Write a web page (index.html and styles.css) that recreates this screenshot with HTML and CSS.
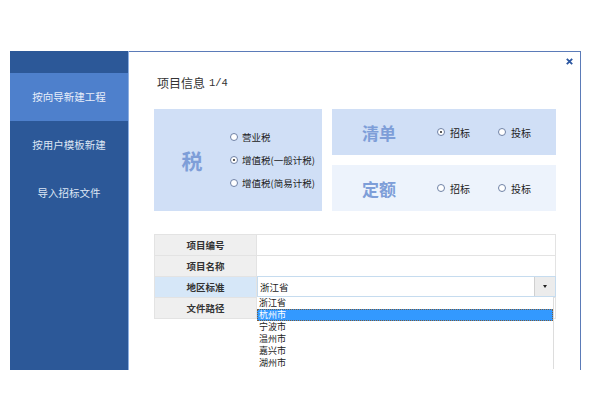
FILE: index.html
```html
<!DOCTYPE html>
<html lang="zh-CN">
<head>
<meta charset="utf-8">
<title>项目信息</title>
<link rel="stylesheet" href="styles.css">
</head>
<body>
<div class="window">
  <nav class="sidebar">
    <div class="nav-item active">按向导新建工程</div>
    <div class="nav-item">按用户模板新建</div>
    <div class="nav-item">导入招标文件</div>
  </nav>
  <main class="main">
    <span class="close" aria-label="关闭">
      <svg width="7" height="7" viewBox="0 0 7 7"><path d="M0.8 0.8 L6.2 6.2 M6.2 0.8 L0.8 6.2" stroke="#2b56a0" stroke-width="1.8" fill="none"/></svg>
    </span>
    <h1 class="title">项目信息 <span class="page">1/4</span></h1>
    <section class="options">
      <div class="box tax">
        <div class="tax-label">税</div>
        <div class="tax-opts">
          <label class="radio"><span class="circle"></span>营业税</label>
          <label class="radio"><span class="circle checked"></span>增值税(一般计税)</label>
          <label class="radio"><span class="circle"></span>增值税(简易计税)</label>
        </div>
      </div>
      <div class="right-col">
        <div class="box row-box dark">
          <div class="box-label">清单</div>
          <label class="radio opt1"><span class="circle checked"></span>招标</label>
          <label class="radio"><span class="circle"></span>投标</label>
        </div>
        <div class="box row-box light">
          <div class="box-label">定额</div>
          <label class="radio opt1"><span class="circle"></span>招标</label>
          <label class="radio"><span class="circle"></span>投标</label>
        </div>
      </div>
    </section>
    <div class="form">
      <div class="form-row">
        <div class="cell-label">项目编号</div>
        <div class="cell-value"></div>
      </div>
      <div class="form-row">
        <div class="cell-label">项目名称</div>
        <div class="cell-value"></div>
      </div>
      <div class="form-row">
        <div class="cell-label focus">地区标准</div>
        <div class="cell-value select-cell">
          <div class="select">
            <span class="select-text">浙江省</span>
            <span class="select-btn"><span class="arrow"></span></span>
          </div>
          <ul class="dropdown">
            <li>浙江省</li>
            <li class="selected">杭州市</li>
            <li>宁波市</li>
            <li>温州市</li>
            <li>嘉兴市</li>
            <li>湖州市</li>
          </ul>
        </div>
      </div>
      <div class="form-row">
        <div class="cell-label">文件路径</div>
        <div class="cell-value"></div>
      </div>
    </div>
  </main>
</div>
</body>
</html>
```

FILE: styles.css
```css
html, body {
  margin: 0;
  padding: 0;
  background: #ffffff;
  font-family: "Noto Sans CJK SC", "Noto Sans", sans-serif;
}

.window {
  display: flex;
  margin: 51px 0 0 10px;
  width: 571px;
  height: 319px;
  border-right: 1px solid #5b7bb8;
  box-sizing: border-box;
}

.sidebar {
  width: 119px;
  flex: none;
  background: #2c5898;
  border-right: 1px solid #8eb0e2;
  padding-top: 22px;
  box-sizing: border-box;
}

.nav-item {
  height: 48px;
  display: flex;
  align-items: center;
  justify-content: center;
  color: #dde6f4;
  font-size: 10.5px;
  padding-bottom: 2px;
  box-sizing: border-box;
}

.nav-item.active {
  background: #4e80cc;
  color: #e8eefa;
}

.main {
  flex: 1;
  position: relative;
  border-top: 1px solid #5b7bb8;
  overflow: hidden;
  padding: 24px 0 0 25px;
  box-sizing: border-box;
}

.close {
  position: absolute;
  top: 6px;
  right: 7px;
  width: 7px;
  height: 7px;
  display: block;
}

.close svg {
  display: block;
}

.title {
  margin: 0 0 0 3px;
  height: 14px;
  display: flex;
  align-items: center;
  gap: 4px;
  font-size: 12px;
  font-weight: normal;
  line-height: 14px;
  color: #333333;
}

.page {
  font-family: "Liberation Mono", monospace;
  font-size: 10.5px;
  line-height: 14px;
}

.options {
  display: flex;
  gap: 10px;
  margin-top: 19px;
  width: 402px;
}

.box {
  box-sizing: border-box;
}

.tax {
  width: 168px;
  display: flex;
  align-items: center;
  background: #d0dff6;
}

.tax-label {
  width: 76px;
  text-align: center;
  font-size: 21px;
  font-weight: bold;
  color: #7e9ed8;
}

.tax-opts {
  display: flex;
  flex-direction: column;
}

.radio {
  display: flex;
  align-items: center;
  font-size: 9.5px;
  color: #222222;
  white-space: nowrap;
}

.tax-opts .radio {
  height: 23px;
}

.circle {
  width: 8px;
  height: 8px;
  box-sizing: border-box;
  border: 1px solid #6f82a6;
  border-radius: 50%;
  background: #ffffff;
  margin-right: 4px;
  position: relative;
  flex: none;
}

.circle.checked::after {
  content: "";
  position: absolute;
  left: 2px;
  top: 2px;
  width: 2px;
  height: 2px;
  border-radius: 50%;
  background: #222222;
}

.right-col {
  width: 224px;
  display: flex;
  flex-direction: column;
  gap: 10px;
}

.row-box {
  height: 46px;
  display: flex;
  align-items: center;
}

.row-box.dark {
  background: #d0dff6;
}

.row-box.light {
  background: #edf3fc;
}

.box-label {
  width: 94px;
  text-align: center;
  font-size: 17px;
  font-weight: bold;
  color: #7e9ed8;
  margin-right: 11px;
}

.row-box .radio {
  font-size: 10px;
}

.row-box .circle {
  margin-right: 5px;
}

.row-box .radio.opt1 {
  width: 61px;
}

.form {
  margin-top: 23px;
  width: 402px;
  border: 1px solid #e3e3e3;
  border-bottom: none;
  box-sizing: border-box;
}

.form-row {
  display: grid;
  grid-template-columns: 102px 1fr;
  height: 21px;
  border-bottom: 1px solid #e3e3e3;
  box-sizing: border-box;
}

.cell-label {
  background: #efefef;
  border-right: 1px solid #e3e3e3;
  display: flex;
  align-items: center;
  justify-content: center;
  font-size: 9.5px;
  font-weight: bold;
  color: #333333;
}

.cell-label.focus {
  background: #d6e7f8;
}

.cell-value {
  background: #ffffff;
}

.select-cell {
  position: relative;
}

.select {
  display: flex;
  height: 21px;
  margin-top: -1px;
  margin-right: -1px;
  border: 1px solid #c6dcef;
  box-sizing: border-box;
  background: #ffffff;
}

.select-text {
  flex: 1;
  display: flex;
  align-items: center;
  padding-left: 2px;
  font-size: 9.5px;
  color: #222222;
}

.select-btn {
  width: 20px;
  background: #ececec;
  border-left: 1px solid #d0d0d0;
  display: flex;
  align-items: center;
  justify-content: center;
}

.arrow {
  width: 0;
  height: 0;
  border-left: 2.5px solid transparent;
  border-right: 2.5px solid transparent;
  border-top: 3px solid #222222;
}

.dropdown {
  position: absolute;
  top: 20px;
  left: 0;
  right: 1px;
  margin: 0;
  padding: 0;
  list-style: none;
  background: #ffffff;
  border-right: 1px solid #dddddd;
  z-index: 2;
}

.dropdown li {
  height: 12px;
  line-height: 12px;
  font-size: 9px;
  padding-left: 2px;
  color: #222222;
  box-sizing: border-box;
  overflow: hidden;
}

.dropdown li.selected {
  background: #3399ff;
  color: #ffffff;
  border: 1px dotted #7b5d3c;
  line-height: 10px;
  padding-left: 1px;
}
```
